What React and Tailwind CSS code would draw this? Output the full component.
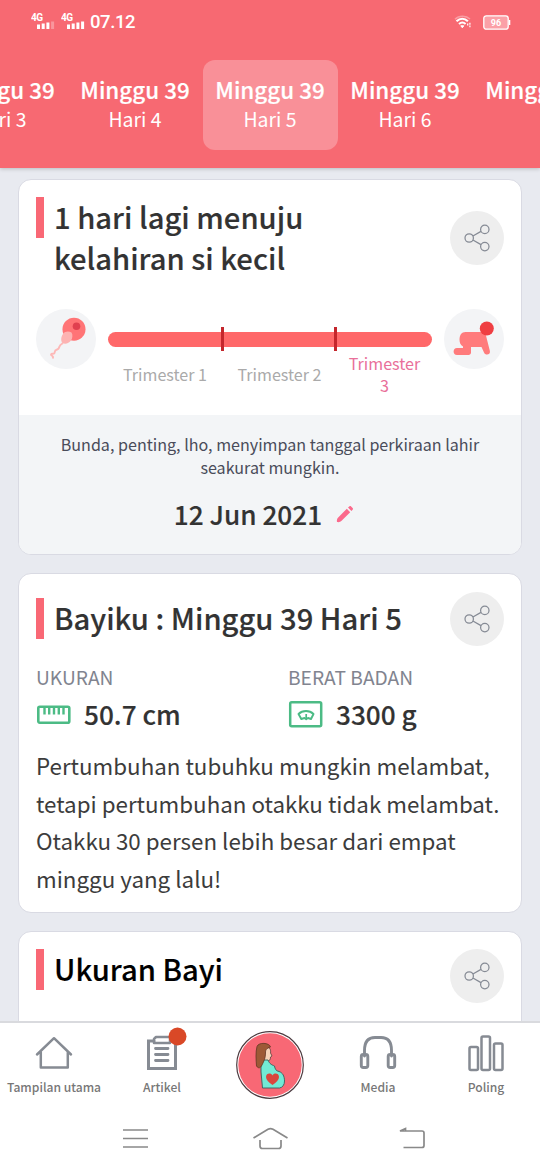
const FONT = "font-['Noto_Sans_CJK_SC','Noto_Sans',sans-serif]";

const DAYS = [
  { week: 39, day: 3 },
  { week: 39, day: 4 },
  { week: 39, day: 5 },
  { week: 39, day: 6 },
  { week: 40 },
];

function Signal({ bars }) {
  return (
    <svg width="24" height="20" viewBox="0 0 24 20">
      <text x="0" y="9" fontFamily="Roboto" fontSize="10" fontWeight="700" fill="#fff" textLength="12">4G</text>
      {[0, 1, 2, 3].map((i) => (
        <rect key={i} x={6 + i * 4.7} y={12.5 - i} width="3" height={4.5 + i} fill="#fff" opacity={i < bars ? 1 : 0.3} />
      ))}
    </svg>
  );
}

function StatusBar() {
  return (
    <div className="flex h-11 items-center pl-[31px] pr-[29px] text-white">
      <Signal bars={3} />
      <span className="w-[6px]" />
      <Signal bars={4} />
      <span className="ml-[5px] font-['Roboto',sans-serif] text-[18.5px] leading-none font-medium tracking-[-0.4px]">07.12</span>
      <svg className="ml-auto" width="18" height="15" viewBox="0 0 18 15" fill="none" stroke="#fff">
        <path d="M1 4.3C5 .3 12 .3 16 4" strokeWidth="1.5" opacity=".35" />
        <path d="M2.5 6.2c3.6-3.3 8-3.3 11.4 0" strokeWidth="2.2" />
        <path d="M5 9c2-1.9 4.6-1.9 6.6 0" strokeWidth="2" />
        <path d="M6.8 10.8h3l-1.500 2z" fill="#fff" />
        <path d="M13.7 8.6v3M15.9 7.8v4.4" strokeWidth="1.2" strokeDasharray="2 .8" />
      </svg>
      <svg className="ml-[11px]" width="28" height="15" viewBox="0 0 28 15">
        <rect x=".8" y=".8" width="24.4" height="13.4" rx="2.5" fill="#fba0a7" stroke="#fff" strokeWidth="1.3" />
        <path d="M26.6 5v5" stroke="#fff" strokeWidth="1.4" />
        <text x="13" y="10.7" textAnchor="middle" fontFamily="Roboto" fontSize="9" fontWeight="700" fill="#fff">96</text>
      </svg>
    </div>
  );
}

function ShareButton() {
  return (
    <button className="grid size-[54px] shrink-0 place-items-center rounded-full bg-[#eeeeee]">
      <svg width="28" height="28" viewBox="0 0 28 28" fill="none" stroke="#868b95" strokeWidth="1.25">
        <circle cx="6.2" cy="14" r="4.2" />
        <circle cx="21.8" cy="5.4" r="4.2" />
        <circle cx="21.8" cy="22.6" r="4.2" />
        <path d="M9.9 12 18 7.4M9.9 16l8.1 4.6" />
      </svg>
    </button>
  );
}

function Title({ children, className = "text-[#333]" }) {
  return (
    <div className="flex">
      <span className="h-[41px] w-[8px] shrink-0 bg-[#f96875]" />
      <h2 className={`-mt-px ml-[10px] text-[29.2px] leading-[41px] font-medium [-webkit-text-stroke:0.15px] ${className}`}>{children}</h2>
    </div>
  );
}

function Card({ children, className = "" }) {
  return <section className={`shrink-0 overflow-hidden rounded-[13px] border border-[#d9dae3] bg-white ${className}`}>{children}</section>;
}

function Progress() {
  return (
    <div className="mt-[30px] flex px-[17px]">
      <svg width="60" height="60" viewBox="0 0 60 60">
        <circle cx="30" cy="30" r="30" fill="#f3f4f6" />
        <circle cx="38" cy="20.2" r="11.5" fill="#ff7476" />
        <circle cx="40.5" cy="17.2" r="3.8" fill="#e0404f" />
        <path d="M27 25c2-3 6-3 8.500-1.500 1.500 2 1 6-.5 8-2 3-6 4-8.500 2.500-2-2-1.500-6.500.5-9z" fill="#fdb3b2" />
        <path d="M27 34c-1.500 1-3 1.700-3.500 3.500-.5 2-1.500 3-3 3.200-2 .3-1.500 2-2 3.300-.8 1.500-3 0-3.500 1.500-.3 1.500 3.500 1.500 1.500 4" fill="none" stroke="#fdb8b7" strokeWidth="1.900" />
      </svg>
      <div className="ml-3 w-[324px]">
        <div className="mt-[18px] flex h-6 items-center">
          <span className="h-[15px] w-[113px] rounded-l-full bg-[#ff6869]" />
          <span className="h-6 w-[3px] bg-[#c4262c]" />
          <span className="h-[15px] w-[110px] bg-[#ff6869]" />
          <span className="h-6 w-[3px] bg-[#c4262c]" />
          <span className="h-[15px] w-[95px] rounded-r-full bg-[#ff6869]" />
        </div>
        <div className="mt-px mb-px flex items-center text-center text-[16.1px] leading-[22px] text-[#aaa]">
          <span className="w-[114px]">Trimester 1</span>
          <span className="w-[115px]">Trimester 2</span>
          <span className="w-[95px] px-2 text-[#e9709a]">Trimester 3</span>
        </div>
      </div>
      <svg className="ml-3" width="60" height="60" viewBox="0 0 60 60">
        <circle cx="30" cy="30" r="30" fill="#f3f4f6" />
        <path d="M21.500 23H38c2 0 3 .8 3.700 2.500l4.200 16.500c.8 3.800-4.500 5-5.900 1.500L37.500 38H27v5.500c0 1.500-1 2.500-2.500 2.500H13c-4.500 0-4.500-7 0-7h6v-1.500c-2.500-1.500-3.500-3.500-3.500-7 0-4.500 2-7.500 6-7.500z" fill="#ff7b7c" />
        <circle cx="42.800" cy="19.500" r="7" fill="#ef3e42" />
      </svg>
    </div>
  );
}

function DueDateCard() {
  return (
    <Card className="h-[376px]">
      <div className="flex h-[99px] justify-between px-[17px] pt-[17px]">
        <Title>1 hari lagi menuju<br />kelahiran si kecil</Title>
        <div className="pt-[14px]"><ShareButton /></div>
      </div>
      <Progress />
      <div className="mt-[18px] h-[180px] bg-[#f3f5f7] pt-[18px] text-center">
        <p className="px-8 text-[16.1px] leading-[22.5px] text-[#4a4c5a]">
          Bunda, penting, lho, menyimpan tanggal perkiraan lahir seakurat mungkin.
        </p>
        <div className="mt-[15px] flex items-center justify-center gap-[13px] pr-[11px]">
          <span className="text-[26.2px] leading-[42px] font-medium text-[#333] [-webkit-text-stroke:0.15px]">12 Jun 2021</span>
          <svg width="20" height="20" viewBox="0 0 20 20" fill="#fb6a8c">
            <path d="M2 18c-.5-2 .2-3.600 1.200-4.600l8.600-8.600 3.400 3.400-8.600 8.600C5.500 17.900 4 18.400 2 18z" />
            <path d="m13 3.600 1.300-1.200c.6-.6 1.200-.6 1.800 0l1.500 1.500c.6.6.6 1.200 0 1.800L16.400 7z" />
          </svg>
        </div>
      </div>
    </Card>
  );
}

function Stat({ label, value, children }) {
  return (
    <div>
      <p className="text-[19.2px] leading-[30px] text-[#81848f]">{label}</p>
      <div className="mt-[2px] flex h-10 items-center">
        {children}
        <span className="ml-3 text-[26.2px] leading-10 font-medium text-[#333] [-webkit-text-stroke:0.15px]">{value}</span>
      </div>
    </div>
  );
}

function BabyCard() {
  return (
    <Card className="h-[340px] px-[17px]">
      <div className="flex justify-between">
        <div className="pt-[24px]"><Title>Bayiku : Minggu 39 Hari 5</Title></div>
        <div className="pt-[18px]"><ShareButton /></div>
      </div>
      <div className="mt-[16px] grid grid-cols-[252px_1fr]">
        <Stat label="UKURAN" value="50.7 cm">
          <svg className="mt-[2px]" width="36" height="20" viewBox="0 0 36 20" fill="none" stroke="#4cbb85" strokeWidth="2.6">
            <rect x="2.3" y="1.800" width="31" height="16" rx="1.5" />
            <path d="M8.500 2v7.500M13.200 2v7.500M18 2v7.500M22.800 2v7.500M27.500 2v7.500" strokeWidth="2.4" />
          </svg>
        </Stat>
        <Stat label="BERAT BADAN" value="3300 g">
          <svg width="36" height="28" viewBox="0 0 36 28" fill="none" stroke="#4cbb85" strokeWidth="2">
            <rect x="2.2" y="2.2" width="31" height="24" rx="1.5" strokeWidth="2.5" />
            <path d="M10.500 14c4-4 11-4 15 0l-2.500 5-3-1-1.800 1.200L16.500 18l-3.200 1z" strokeWidth="1.9" strokeLinejoin="round" />
            <path d="M18.200 14v4" strokeWidth="1.7" />
          </svg>
        </Stat>
      </div>
      <p className="mt-[13px] text-[22.35px] leading-[37.5px] whitespace-nowrap text-[#3c3c3c]">
        Pertumbuhan tubuhku mungkin melambat,<br />
        tetapi pertumbuhan otakku tidak melambat.<br />
        Otakku 30 persen lebih besar dari empat<br />
        minggu yang lalu!
      </p>
    </Card>
  );
}

function NavItem({ label, children }) {
  return (
    <div className="flex w-[108px] flex-col items-center pt-[12px]">
      <svg width="40" height="38" viewBox="0 0 40 38" fill="none" stroke="#868b93" strokeWidth="2.5" strokeLinejoin="round" strokeLinecap="round" className="overflow-visible">
        {children}
      </svg>
      <span className="mt-[5px] text-[12.1px] leading-[18px] font-medium whitespace-nowrap text-[#777]">{label}</span>
    </div>
  );
}

function BottomNav() {
  return (
    <nav className="h-[149px] shrink-0 border-t-2 border-[#d9dade] bg-white">
      <div className="flex h-[84px]">
        <NavItem label="Tampilan utama">
          <path d="M3 19.500 20 3.200l17 16.300M6.800 17v15.500h27V17" />
        </NavItem>
        <NavItem label="Artikel">
          <path d="M12 6H6.500v27.500h27V6" strokeLinejoin="miter" strokeWidth="3" />
          <path d="M14 2h14v6H12V4z" />
          <path d="M13.500 13.500H26M13.500 19.500H26M13.500 25.500H26" strokeWidth="2.8" />
          <circle cx="35.5" cy="1.5" r="9" fill="#d94827" stroke="none" />
        </NavItem>
        <div className="flex w-[108px] justify-center pt-[7px]">
          <svg width="70" height="70" viewBox="0 0 70 70">
            <circle cx="35" cy="35" r="33.3" fill="#fff" stroke="#4c3b40" strokeWidth="1.2" />
            <circle cx="35" cy="35" r="31.7" fill="#f86875" />
            <path d="M30 17c5-.5 6 3 5.500 6l1.500 3-1.500 1c0 3-1 4-3.500 4l-5-1 1-12z" fill="#f6d2b8" stroke="#473532" strokeWidth=".7" />
            <path d="M26 30h7c1.500 4 4 5 6.500 6 .5 3 1.500 5 4.500 5.500 3.500 1 5.500 4.500 5.500 9.500 0 4-2 6.500-5 7H27.500L26 42z" fill="#72ead5" stroke="#37605b" strokeWidth=".9" />
            <path d="M35.500 17c-1-4.500-12-5-13.500-.5C20.500 22 21 30 21.500 36c2 3 4 2 5.500-1 2-4 3.500-7 3.500-12 0-3 .5-4.500 5-6z" fill="#9d5936" stroke="#633625" strokeWidth=".8" />
            <path d="M37.500 55c-4-3-6.500-5-6.500-8 0-4 5-4.500 6.500-1.500 1.500-3 6.500-2.500 6.500 1.500 0 3-2.500 5-6.500 8z" fill="#da473e" />
          </svg>
        </div>
        <NavItem label="Media">
          <path d="M6.500 21V15.500C6.500 6 11 2.500 17 2.500h6C29 2.500 33.500 6 33.500 15.500V21" strokeWidth="2.9" />
          <rect x="3.3" y="19.500" width="6.5" height="13" rx="2" strokeWidth="2.9" />
          <rect x="30.2" y="19.500" width="6.5" height="13" rx="2" strokeWidth="2.9" />
        </NavItem>
        <NavItem label="Poling">
          <rect x="3.5" y="12" width="8.5" height="23" rx="1.5" />
          <rect x="15.5" y="1.500" width="8.5" height="33.500" rx="1.5" />
          <rect x="28" y="8.500" width="8.500" height="26.500" rx="1.5" />
        </NavItem>
      </div>
      <div className="flex justify-center gap-[98px] pt-[15px]">
        <svg width="40" height="30" viewBox="0 0 40 30" fill="none" stroke="#898989" strokeWidth="1.7">
          <path d="M11 8h25M11 16.500h25M11 25h25" />
        </svg>
        <svg width="40" height="30" viewBox="0 0 40 30" fill="none" stroke="#898989" strokeWidth="1.7">
          <path d="M3.500 16 18 7.200q2.500-1.200 5 0L37.500 16M10 18v6q0 2.500 2.500 2.500h16Q31 26.500 31 24v-6" />
        </svg>
        <svg width="40" height="30" viewBox="0 0 40 30" fill="none" stroke="#898989" strokeWidth="1.7">
          <path d="M12 9H34q2 0 2 2v12.500q0 2-2 2H15.500M12 9l5.500-2.500V9z" />
        </svg>
      </div>
    </nav>
  );
}

export default function App() {
  return (
    <div className={`flex h-[1170px] w-[540px] flex-col overflow-hidden bg-[#e8eaf0] ${FONT}`}>
      <header className="z-10 h-[168px] shrink-0 overflow-hidden bg-[#f76972] shadow-[0_1px_4px_rgba(0,0,0,0.2)]">
        <StatusBar />
        <div className="mt-4 flex justify-center text-center text-white">
          {DAYS.map(({ week, day }, i) => (
            <div key={i} className={`h-[90px] w-[135px] shrink-0 rounded-[12px] pt-[14px] ${day === 5 ? "bg-[#f99098]" : ""}`}>
              <div className="text-[22.4px] leading-[30px] font-medium [-webkit-text-stroke:0.2px]">Minggu {week}</div>
              {day && <div className="mt-[2px] text-[19.4px] leading-[26px]">Hari {day}</div>}
            </div>
          ))}
        </div>
      </header>
      <main className="flex min-h-0 flex-1 flex-col gap-[18px] overflow-hidden px-[18px] pt-[11px]">
        <DueDateCard />
        <BabyCard />
        <Card className="h-[338px] px-[17px] pt-[17px]">
          <div className="flex justify-between">
            <Title className="text-black">Ukuran Bayi</Title>
            <ShareButton />
          </div>
        </Card>
      </main>
      <BottomNav />
    </div>
  );
}
